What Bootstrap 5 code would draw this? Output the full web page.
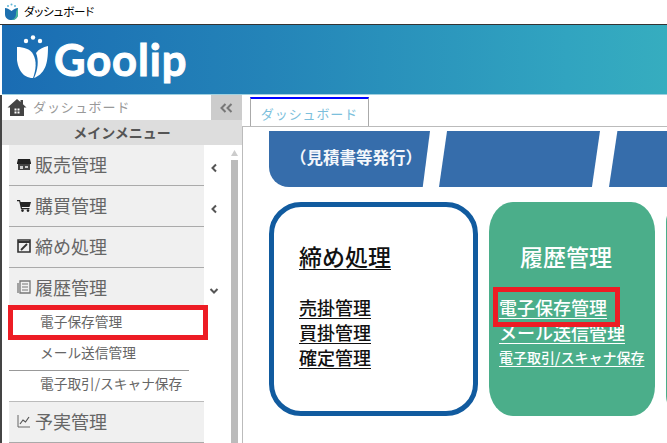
<!DOCTYPE html>
<html lang="ja">
<head>
<meta charset="utf-8">
<title>ダッシュボード</title>
<link href="https://cdn.jsdelivr.net/npm/bootstrap@5.3.0/dist/css/bootstrap.min.css" rel="stylesheet">
<style>
html,body{width:667px;height:443px;overflow:hidden;background:#fff;font-family:"Noto Sans CJK JP","Noto Sans",sans-serif;}
.appwin{position:relative;width:667px;height:443px;overflow:hidden;}
.titlebar{height:25px;border-bottom:1px solid #333;padding-left:4px;gap:5px;font-size:11.5px;font-feature-settings:"palt";letter-spacing:-.2px;color:#000;}
.titlebar svg{width:15px;height:18px;}
.brandbar{height:70px;margin-left:2px;background:linear-gradient(90deg,#1a6cb3 0%,#2484b8 40%,#31a4c0 85%,#36adbf 100%);padding-left:14px;color:#fff;gap:2px;border-bottom:1px solid #9fd0e0;}
.brandbar svg{width:36px;height:44px;margin-top:-6px;}
.brandtext{font-family:Lato,sans-serif;font-weight:700;font-size:43.5px;line-height:1;-webkit-text-stroke:1px #fff;letter-spacing:.9px;margin-top:1px;}
.mainrow{height:348px;border-left:2px solid #444;}
.sidebar{width:240px;height:348px;flex:none;}
.crumb{height:25px;color:#999;font-size:13px;letter-spacing:.9px;}
.crumbtext{width:209px;padding-left:5px;gap:6px;}
.crumbtext svg{width:20px;height:17px;}
.crumbtext span{margin-top:-2px;}
.collapsebtn{width:31px;background:#ccc;color:#777;font-weight:700;font-size:14px;}
.menuhead{height:25px;background:#ddd;color:#555;font-weight:700;font-size:14px;}
.menubody{height:298px;overflow:hidden;padding-left:7px;}
.menulist{width:214px;}
.parentrow{height:41px;}
.parentlabel{width:195px;height:41px;background:#f0f0f0;border-bottom:1px solid #aaa;color:#666;font-size:18px;padding:0 0 2px 8px;gap:4px;}
.parentlabel svg{width:14px;height:14px;flex:none;}
.chev{width:19px;text-align:center;}
.chev svg{width:8px;height:10px;}
.chevdown svg{width:10px;height:8px;}
.subrow{height:31px;color:#666;font-size:13.7px;padding:0 0 5px 31px;width:180px;white-space:nowrap;border-bottom:1px solid #999;}
.subrow.lastsub{width:195px;border-bottom-color:#bbb;}
.scrollcol{width:7px;margin-left:8px;}
.scrollcol svg{width:7px;height:6px;display:block;margin:5px 0 4px;}
.scrollthumb{height:290px;background:#bbb;}
.workarea{width:425px;}
.tabstrip{height:31px;padding-left:8px;padding-top:2px;}
.dashtab{width:119px;height:29px;border:1px solid #aaa;border-top:2px solid #00f;border-bottom:0;color:#7cbfdc;font-size:13px;letter-spacing:.9px;padding-top:2px;}
.workpane{height:317px;border-top:1px solid #bbb;border-left:1px solid #bbb;padding:4px 0 0 26px;overflow:hidden;}
.bannerrow{height:56px;width:420px;position:relative;}
.bannerbit{height:56px;background:#366dab;flex:none;}
.bannerone{width:161px;border-bottom-left-radius:20px;clip-path:polygon(0 0,100% 0,95.500% 100%,0 100%);color:#f4f7fb;font-weight:700;font-size:16.500px;padding:0 0 4px 21px;white-space:nowrap;}
.bannertwo{width:161px;margin-left:9px;clip-path:polygon(5% 0,100% 0,95% 100%,0 100%);}
.bannerthree{width:120px;margin-left:9px;clip-path:polygon(7% 0,100% 0,100% 100%,0 100%);}
.cardrow{margin-top:15px;gap:11px;width:420px;}
.tilebase{height:214px;flex:none;padding-top:37px;}
.tilewhite{width:209px;border:5px solid #115b9f;border-radius:32px;padding:32px 0 0 25px;color:#111;}
.tilegreen{width:166px;background:#4bae8a;border-radius:24px/30px;color:#fff;padding-left:10px;}
.tileedge{width:20px;background:#4bae8a;border-radius:24px 0 0 24px;}
.tiletitle{font-size:23px;line-height:34px;font-weight:500;color:inherit;text-decoration:underline;text-underline-offset:3px;text-decoration-thickness:1px;display:block;}
.tilelink{font-size:18px;line-height:25px;font-weight:500;color:inherit;text-decoration:underline;text-underline-offset:3px;text-decoration-thickness:1px;display:block;white-space:nowrap;}
.tilesmall{font-size:14px;line-height:25px;}
.tilegreen .tiletitle{text-decoration:none;padding-left:21px;margin-bottom:22px;}
.tilewhite .tiletitle{margin-bottom:22px;}
.redmark{position:absolute;border:5px solid #ed1c24;pointer-events:none;}
.redside{left:8px;top:305px;width:200px;height:35px;}
.redtile{left:493px;top:287px;width:127px;height:40px;}
</style>
</head>
<body>
<div class="appwin">
  <div class="titlebar d-flex align-items-center">
    <svg viewBox="0 0 15 18"><circle cx="4" cy="3" r="1" fill="#5fb6d6"/><circle cx="7.500" cy="1.600" r="1" fill="#5fb6d6"/><circle cx="11" cy="3" r="1" fill="#5fb6d6"/><path d="M1 5c2 0 4 1 6.500 3C10 6 12 5 14 5v6c0 4-3 6-6.500 6S1 15 1 11z" fill="#1c6fae"/><path d="M14 5v6c0 4-3 6-6.500 6 3 -1 4.500-3 4.500-6 0-2 .5-4 2-6z" fill="#4bb79a"/></svg>
    <span>ダッシュボード</span>
  </div>
  <div class="brandbar d-flex align-items-center">
    <svg viewBox="0 0 36 44"><circle cx="10" cy="6" r="2.200" fill="#fff"/><circle cx="17" cy="2.500" r="2.200" fill="#fff"/><circle cx="24" cy="6" r="2.200" fill="#fff"/><path d="M1 12C8 12 14 14 17 19C21 26 20 35 17 43C6 43 2 33 1 25Z" fill="#fff"/><path d="M32 11C32 25 31 38 18 43C22 35 23 25 20 18C23 14 27 12 32 11Z" fill="#fff"/></svg>
    <span class="brandtext">Goolip</span>
  </div>
  <div class="mainrow d-flex">
    <aside class="sidebar d-flex flex-column">
      <div class="crumb d-flex">
        <div class="crumbtext d-flex align-items-center">
          <svg viewBox="0 0 19 17"><path d="M9.500 0L0 8.500h2.500V17h14V8.500H19L15.500 5.300V1h-2.500v2zM7 9.500h2v2H7zm3 0h2v2h-2zm-3 3h2v2H7zm3 0h2v2h-2z" fill="#444" fill-rule="evenodd"/></svg>
          <span>ダッシュボード</span>
        </div>
        <div class="collapsebtn d-flex align-items-center justify-content-center"><svg width="13" height="10" viewBox="0 0 13 10"><path d="M5.500 1L1.500 5l4 4M11.500 1L7.500 5l4 4" fill="none" stroke="#777" stroke-width="2"/></svg></div>
      </div>
      <div class="menuhead d-flex align-items-center justify-content-center">メインメニュー</div>
      <div class="menubody d-flex">
        <div class="menulist">
          <div class="parentrow d-flex align-items-center">
            <div class="parentlabel d-flex align-items-center"><svg viewBox="0 0 14 14"><path d="M1 2h12l1 4v1H0V6z" fill="#222"/><path d="M1 7h12v6H1z" fill="#444"/><path d="M3 9h3v3H3zm5 0h3v2H8z" fill="#ccc"/></svg><span>販売管理</span></div>
            <div class="chev"><svg viewBox="0 0 8 10"><path d="M6 1.500L2.500 5 6 8.500" fill="none" stroke="#555" stroke-width="2"/></svg></div>
          </div>
          <div class="parentrow d-flex align-items-center">
            <div class="parentlabel d-flex align-items-center"><svg viewBox="0 0 14 14"><path d="M0 2h3l.6 2H14l-1.500 5H4.800L5 10h7.500v1.200H4L2.200 3.200H0z" fill="#222"/><circle cx="5.500" cy="12.600" r="1.300" fill="#222"/><circle cx="11" cy="12.600" r="1.300" fill="#222"/></svg><span>購買管理</span></div>
            <div class="chev"><svg viewBox="0 0 8 10"><path d="M6 1.500L2.500 5 6 8.500" fill="none" stroke="#555" stroke-width="2"/></svg></div>
          </div>
          <div class="parentrow d-flex align-items-center">
            <div class="parentlabel d-flex align-items-center"><svg viewBox="0 0 14 14"><path d="M1 1h12v12H1z" fill="none" stroke="#333" stroke-width="1.600"/><path d="M1 3h12" stroke="#333" stroke-width="2"/><path d="M4 11l6-6" stroke="#333" stroke-width="1.800"/></svg><span>締め処理</span></div>
            <div class="chev"></div>
          </div>
          <div class="parentrow d-flex align-items-center">
            <div class="parentlabel d-flex align-items-center"><svg viewBox="0 0 14 14"><path d="M3 1h10v12H3zM1 3v10" fill="none" stroke="#777" stroke-width="1.300"/><path d="M5 4h6M5 7h6M5 10h6" stroke="#777" stroke-width="1.200"/></svg><span>履歴管理</span></div>
            <div class="chev chevdown"><svg viewBox="0 0 10 8"><path d="M1.500 2L5 5.500 8.500 2" fill="none" stroke="#555" stroke-width="2"/></svg></div>
          </div>
          <div class="subrow d-flex align-items-center">電子保存管理</div>
          <div class="subrow d-flex align-items-center">メール送信管理</div>
          <div class="subrow lastsub d-flex align-items-center">電子取引/スキャナ保存</div>
          <div class="parentrow d-flex align-items-center">
            <div class="parentlabel d-flex align-items-center"><svg viewBox="0 0 14 14"><path d="M1 1v12h12" fill="none" stroke="#666" stroke-width="1"/><path d="M3 10l3-4 2.500 2L12 3" fill="none" stroke="#555" stroke-width="1.200"/></svg><span>予実管理</span></div>
            <div class="chev"></div>
          </div>
        </div>
        <div class="scrollcol">
          <svg viewBox="0 0 7 6"><path d="M3.500 0L7 6H0z" fill="#ccc"/></svg>
          <div class="scrollthumb"></div>
        </div>
      </div>
    </aside>
    <main class="workarea">
      <div class="tabstrip"><div class="dashtab d-flex align-items-center justify-content-center">ダッシュボード</div></div>
      <div class="workpane">
        <div class="bannerrow d-flex">
          <div class="bannerbit bannerone d-flex align-items-center">（見積書等発行）</div>
          <div class="bannerbit bannertwo"></div>
          <div class="bannerbit bannerthree"></div>
        </div>
        <div class="cardrow d-flex">
          <div class="tilebase tilewhite">
            <a class="tiletitle" href="#">締め処理</a>
            <a class="tilelink" href="#">売掛管理</a>
            <a class="tilelink" href="#">買掛管理</a>
            <a class="tilelink" href="#">確定管理</a>
          </div>
          <div class="tilebase tilegreen">
            <span class="tiletitle">履歴管理</span>
            <a class="tilelink" href="#">電子保存管理</a>
            <a class="tilelink" href="#">メール送信管理</a>
            <a class="tilelink tilesmall" href="#">電子取引/スキャナ保存</a>
          </div>
          <div class="tilebase tileedge"></div>
        </div>
      </div>
    </main>
  </div>
  <div class="redmark redside"></div>
  <div class="redmark redtile"></div>
</div>
<script src="https://cdn.jsdelivr.net/npm/bootstrap@5.3.0/dist/js/bootstrap.bundle.min.js"></script>
</body>
</html>
